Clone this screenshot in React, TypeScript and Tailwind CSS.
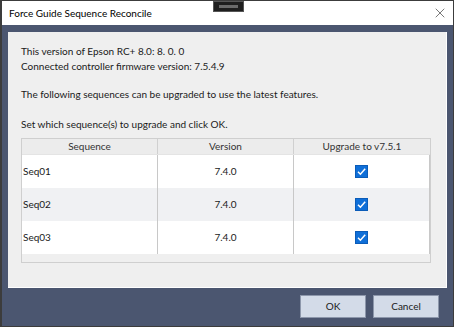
import { X } from "lucide-react";

const rows = [
	{ name: "Seq01", version: "7.4.0", alt: false },
	{ name: "Seq02", version: "7.4.0", alt: true },
	{ name: "Seq03", version: "7.4.0", alt: false },
];

function Check() {
	return (
		<div className="w-[13px] h-[13px] bg-[#0f6fd8] border border-[#0b5cb8] flex items-center justify-center">
			<svg width="11" height="11" viewBox="0 0 11 11" fill="none">
				<path d="M2 5.8 L4.4 8.2 L9.2 2.8" stroke="white" strokeWidth="1.5" />
			</svg>
		</div>
	);
}

export default function App() {
	return (
		<div
			className="w-[454px] h-[327px] bg-[#4b5670] border border-[#3c3c3c] border-l-2 flex flex-col text-[10px] text-[#1a1a1a] relative"
			style={{ fontFamily: 'Lato, "Noto Sans", sans-serif' }}>
			{/* title bar */}
			<div className="h-[24px] bg-white flex items-center justify-between pl-[7px] pr-[5px] shrink-0">
				<span className="text-[10px] text-black">Force Guide Sequence Reconcile</span>
				<X size={16} strokeWidth={1} className="text-[#333]" />
			</div>
			<div className="absolute left-[211px] top-0 w-[31px] h-[11px] bg-[#1e1e1e] border border-[#555] flex items-center justify-center">
				<div className="w-[19px] h-[3px] bg-[#6a6a6a]" />
			</div>

			{/* body */}
			<div className="flex-1 flex flex-col px-[6px] pt-[7px] pb-[7px]">
				<div className="h-[256px] bg-[#efefef] border-r border-b border-white px-[13px] pt-[12px] flex flex-col">
					<div className="leading-[15px]">
						<div>This version of Epson RC+ 8.0: 8. 0. 0</div>
						<div>Connected controller firmware version: 7.5.4.9</div>
						<div className="mt-[13px]">The following sequences can be upgraded to use the latest features.</div>
						<div className="mt-[15px]">Set which sequence(s) to upgrade and click OK.</div>
					</div>

					<div className="mt-[6px] w-[410px] h-[125px] border border-[#cfcfcf] bg-[#efefef] flex flex-col">
						<div className="h-[16px] flex text-[#333] bg-[#ececec] border-b border-[#e4e4e4]">
							<div className="w-[136px] text-center leading-[15px] border-r border-[#d0d0d0]">Sequence</div>
							<div className="w-[136px] text-center leading-[15px] border-r border-[#d0d0d0]">Version</div>
							<div className="w-[136px] text-center leading-[15px]">Upgrade to v7.5.1</div>
						</div>
						{rows.map((r) => (
							<div
								key={r.name}
								className={`h-[33px] w-[408px] flex items-center ${r.alt ? "bg-[#f0f1f3]" : "bg-white"}`}>
								<div className="w-[136px] h-full flex items-center border-r border-[#c8c8c8] pl-[1px]">{r.name}</div>
								<div className="w-[136px] h-full flex items-center justify-center border-r border-[#c8c8c8]">
									{r.version}
								</div>
								<div className="w-[136px] h-full flex items-center justify-center border-r border-[#c8c8c8]">
									<Check />
								</div>
							</div>
						))}
					</div>
				</div>

				<div className="flex justify-end gap-[7px] mt-[7px] pr-[8px]">
					<button className="w-[66px] h-[23px] bg-[#d3dbe8] border border-[#8d97ab] text-[#1a1a1a]">OK</button>
					<button className="w-[66px] h-[23px] bg-[#d3dbe8] border border-[#8d97ab] text-[#1a1a1a]">Cancel</button>
				</div>
			</div>
		</div>
	);
}
